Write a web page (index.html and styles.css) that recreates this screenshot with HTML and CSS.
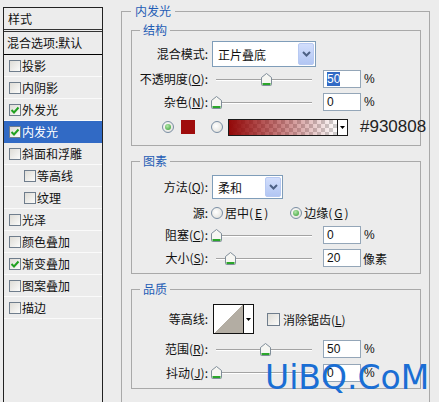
FILE: index.html
```html
<!DOCTYPE html>
<html>
<head>
    <title>图层样式 - 内发光</title>
    <link rel="stylesheet" href="styles.css">
</head>
<body>
    <div class="dialog">
        <div class="side">
            <div class="side-head">样式</div>
            <div class="side-blend">混合选项:默认</div>
            <ul class="side-list">
                <li><span class="cb"></span>投影</li>
                <li><span class="cb"></span>内阴影</li>
                <li><span class="cb"><svg width="10" height="10" viewBox="0 0 10 10"><path d="M1.5 5 L4 7.5 L8.5 2.5" fill="none" stroke="#21a121" stroke-width="2"/></svg></span>外发光</li>
                <li class="on"><span class="cb"><svg width="10" height="10" viewBox="0 0 10 10"><path d="M1.5 5 L4 7.5 L8.5 2.5" fill="none" stroke="#21a121" stroke-width="2"/></svg></span>内发光</li>
                <li><span class="cb"></span>斜面和浮雕</li>
                <li class="sub"><span class="cb"></span>等高线</li>
                <li class="sub"><span class="cb"></span>纹理</li>
                <li><span class="cb"></span>光泽</li>
                <li><span class="cb"></span>颜色叠加</li>
                <li><span class="cb"><svg width="10" height="10" viewBox="0 0 10 10"><path d="M1.5 5 L4 7.5 L8.5 2.5" fill="none" stroke="#21a121" stroke-width="2"/></svg></span>渐变叠加</li>
                <li><span class="cb"></span>图案叠加</li>
                <li><span class="cb"></span>描边</li>
            </ul>
        </div>

        <div class="group">
            <span class="title title-main">内发光</span>

            <div class="box box-struct">
                <span class="title">结构</span>
                <div class="row row-26">
                    <label class="lbl">混合模式:</label>
                    <div class="select sel-blend"><span>正片叠底</span><i class="dd"><svg width="9" height="6" viewBox="0 0 9 6"><path d="M1 1 L4.5 4.5 L8 1" fill="none" stroke="#4d6185" stroke-width="2"/></svg></i></div>
                </div>
                <div class="row row-24">
                    <label class="lbl">不透明度(<u>O</u>):</label>
                    <div class="slider"><svg class="thumb" style="left:50px" width="11" height="13" viewBox="0 0 11 13"><path d="M5.5 0.5 L10.5 4.5 V11.5 Q10.5 12.5 9.5 12.5 H1.5 Q0.5 12.5 0.5 11.5 V4.5 Z" fill="#f6f6f2" stroke="#7f8d99"/><path d="M1.5 11 H9.5" stroke="#2aa52a" stroke-width="2"/></svg></div>
                    <div class="num"><span class="picked">50</span></div>
                    <span class="unit">%</span>
                </div>
                <div class="row row-22">
                    <label class="lbl">杂色(<u>N</u>):</label>
                    <div class="slider"><svg class="thumb" style="left:0px" width="11" height="13" viewBox="0 0 11 13"><path d="M5.5 0.5 L10.5 4.5 V11.5 Q10.5 12.5 9.5 12.5 H1.5 Q0.5 12.5 0.5 11.5 V4.5 Z" fill="#f6f6f2" stroke="#7f8d99"/><path d="M1.5 11 H9.5" stroke="#2aa52a" stroke-width="2"/></svg></div>
                    <div class="num">0</div>
                    <span class="unit">%</span>
                </div>
                <div class="row row-color">
                    <span class="radio on"></span>
                    <span class="swatch"></span>
                    <span class="radio radio-grad"></span>
                    <div class="gradient">
                        <span class="gradient-bar"></span>
                        <span class="gradient-btn"><svg width="5" height="3" viewBox="0 0 5 3"><path d="M0 0 H5 L2.5 3 Z" fill="#000"/></svg></span>
                    </div>
                    <span class="hex">#930808</span>
                </div>
            </div>

            <div class="box box-elem">
                <span class="title">图素</span>
                <div class="row row-28">
                    <label class="lbl">方法(<u>Q</u>):</label>
                    <div class="select sel-method"><span>柔和</span><i class="dd"><svg width="9" height="6" viewBox="0 0 9 6"><path d="M1 1 L4.5 4.5 L8 1" fill="none" stroke="#4d6185" stroke-width="2"/></svg></i></div>
                </div>
                <div class="row row-23">
                    <label class="lbl">源:</label>
                    <span class="opt opt-first"><span class="radio"></span>居中(<u>E</u>)</span>
                    <span class="opt opt-second"><span class="radio on"></span>边缘(<u>G</u>)</span>
                </div>
                <div class="row row-22">
                    <label class="lbl">阻塞(<u>C</u>):</label>
                    <div class="slider"><svg class="thumb" style="left:0px" width="11" height="13" viewBox="0 0 11 13"><path d="M5.5 0.5 L10.5 4.5 V11.5 Q10.5 12.5 9.5 12.5 H1.5 Q0.5 12.5 0.5 11.5 V4.5 Z" fill="#f6f6f2" stroke="#7f8d99"/><path d="M1.5 11 H9.5" stroke="#2aa52a" stroke-width="2"/></svg></div>
                    <div class="num">0</div>
                    <span class="unit">%</span>
                </div>
                <div class="row row-24">
                    <label class="lbl">大小(<u>S</u>):</label>
                    <div class="slider"><svg class="thumb" style="left:14px" width="11" height="13" viewBox="0 0 11 13"><path d="M5.5 0.5 L10.5 4.5 V11.5 Q10.5 12.5 9.5 12.5 H1.5 Q0.5 12.5 0.5 11.5 V4.5 Z" fill="#f6f6f2" stroke="#7f8d99"/><path d="M1.5 11 H9.5" stroke="#2aa52a" stroke-width="2"/></svg></div>
                    <div class="num">20</div>
                    <span class="unit unit-px">像素</span>
                </div>
            </div>

            <div class="box box-qual">
                <span class="title">品质</span>
                <div class="row row-34">
                    <label class="lbl">等高线:</label>
                    <div class="contour">
                        <span class="contour-shape"></span>
                        <span class="contour-btn"><svg width="5" height="3" viewBox="0 0 5 3"><path d="M0 0 H5 L2.5 3 Z" fill="#000"/></svg></span>
                    </div>
                    <span class="cb cb-aa"></span>
                    <span class="aa-text">消除锯齿(<u>L</u>)</span>
                </div>
                <div class="row row-26">
                    <label class="lbl">范围(<u>R</u>):</label>
                    <div class="slider"><svg class="thumb" style="left:49px" width="11" height="13" viewBox="0 0 11 13"><path d="M5.5 0.5 L10.5 4.5 V11.5 Q10.5 12.5 9.5 12.5 H1.5 Q0.5 12.5 0.5 11.5 V4.5 Z" fill="#f6f6f2" stroke="#7f8d99"/><path d="M1.5 11 H9.5" stroke="#2aa52a" stroke-width="2"/></svg></div>
                    <div class="num">50</div>
                    <span class="unit">%</span>
                </div>
                <div class="row row-21">
                    <label class="lbl">抖动(<u>J</u>):</label>
                    <div class="slider"><svg class="thumb" style="left:0px" width="11" height="13" viewBox="0 0 11 13"><path d="M5.5 0.5 L10.5 4.5 V11.5 Q10.5 12.5 9.5 12.5 H1.5 Q0.5 12.5 0.5 11.5 V4.5 Z" fill="#f6f6f2" stroke="#7f8d99"/><path d="M1.5 11 H9.5" stroke="#2aa52a" stroke-width="2"/></svg></div>
                    <div class="num">0</div>
                    <span class="unit">%</span>
                </div>
            </div>
        </div>
    </div>
    <div class="watermark">UiBQ.CoM</div>
</body>
</html>
```
FILE: styles.css
```css
html, body { margin: 0; height: 100%; overflow: hidden; }
body { background: #ececec; font-family: "Noto Sans CJK SC", "Liberation Sans", sans-serif; font-size: 12px; color: #111; }
u { text-decoration: underline; }

.dialog { display: flex; align-items: flex-start; }

/* style list on the left */
.side { margin: 7px 0 0 3px; width: 100px; height: 395px; box-sizing: border-box; border: 1px solid #222; border-bottom: none; }
.side-head { height: 21px; line-height: 21px; padding-left: 4px; border-bottom: 3px double #333; }
.side-blend { height: 22px; line-height: 22px; padding-left: 3px; border-bottom: 1px solid #000; }
.side-list { list-style: none; margin: 0; padding: 0; }
.side-list li { height: 21px; display: flex; align-items: center; padding-left: 5px; border-bottom: 1px solid #fafafa; }
.side-list li.sub { padding-left: 20px; }
.side-list li.on { background: #316ac5; color: #fff; border-bottom-color: #316ac5; }

.cb { width: 12px; height: 12px; box-sizing: border-box; border: 1px solid #6f7d8c; background: linear-gradient(135deg, #dedcd6, #fbfbfa); margin-right: 1px; flex: none; display: flex; align-items: center; justify-content: center; }

/* group boxes */
.group { position: relative; margin: 11px 0 0 18px; width: 309px; height: 410px; box-sizing: border-box; padding: 18px 8px 0 9px; border: 1px solid #a9a9a9; }
.box { position: relative; width: 290px; box-sizing: border-box; border: 1px solid #a9a9a9; }
.box-struct { padding: 10px 0 4px; }
.box-elem { margin-top: 15px; padding: 11px 0 3px; }
.box-qual { margin-top: 15px; padding: 12px 0 5px; }
.title { position: absolute; top: -9px; left: 8px; padding: 0 3px; line-height: 16px; background: #ececec; color: #1f5cb5; }
.title-main { left: 9px; padding: 0 4px; }

.row { display: flex; align-items: center; }
.row-21 { height: 21px; }
.row-22 { height: 22px; }
.row-23 { height: 23px; }
.row-24 { height: 24px; }
.row-26 { height: 26px; }
.row-28 { height: 28px; }
.row-34 { height: 34px; }
.lbl { width: 76px; margin-right: 4px; text-align: right; white-space: nowrap; flex: none; line-height: 16px; }

/* drop-down boxes */
.select { display: flex; align-items: center; justify-content: space-between; box-sizing: border-box; border: 1px solid #7f9db9; background: #fff; padding: 1px 1px 1px 5px; flex: none; }
.sel-blend { width: 104px; height: 26px; }
.sel-method { width: 71px; height: 24px; }
.select span { line-height: 16px; padding-top: 2px; }
.dd { width: 16px; align-self: stretch; box-sizing: border-box; border: 1px solid #b7c9f2; border-radius: 2px; background: linear-gradient(#d2defc, #b2c6f3); display: flex; align-items: center; justify-content: center; }

/* sliders */
.slider { position: relative; width: 106px; height: 13px; margin-left: -1px; flex: none; }
.slider::before { content: ""; position: absolute; left: 5px; right: 5px; top: 6px; height: 1px; background: #a3a3a3; border-bottom: 1px solid #fff; }
.thumb { position: absolute; top: 0; }

.num { width: 38px; height: 18px; box-sizing: border-box; margin-left: 6px; padding-left: 3px; border: 1px solid #94a6b8; background: #fff; font-family: "Liberation Sans", sans-serif; font-size: 12px; line-height: 16px; flex: none; }
.picked { background: #316ac5; color: #fff; }
.unit { margin-left: 3px; font-family: "Liberation Sans", sans-serif; font-size: 12px; }
.unit-px { font-family: "Noto Sans CJK SC", sans-serif; margin-left: 2px; }

/* colour row */
.row-color { height: 28px; padding-left: 30px; }
.radio { width: 12px; height: 12px; box-sizing: border-box; border: 1px solid #7a8ea4; border-radius: 50%; background: radial-gradient(circle at 40% 40%, #fff, #dcdbd5); flex: none; display: flex; align-items: center; justify-content: center; }
.radio.on::after { content: ""; width: 6px; height: 6px; border-radius: 50%; background: radial-gradient(circle at 40% 35%, #b4e8ab, #2f9a2f); }
.swatch { width: 14px; height: 14px; margin-left: 7px; background: #9f0c0c; flex: none; }
.radio-grad { margin-left: 16px; }
.gradient { display: flex; width: 120px; height: 17px; margin-left: 5px; box-sizing: border-box; border: 1px solid #1a1a1a; flex: none; }
.gradient-bar { flex: 1; background: linear-gradient(to right, #930808, rgba(147, 8, 8, 0)), conic-gradient(#cfcfcf 25%, #fff 0 50%, #cfcfcf 0 75%, #fff 0) 0 0 / 8px 8px; }
.gradient-btn { width: 9px; border-left: 1px solid #1a1a1a; background: #fff; display: flex; align-items: center; justify-content: center; }
.hex { margin-left: 12px; font-family: "Liberation Sans", sans-serif; font-size: 17px; color: #222; }

/* source options */
.opt { display: flex; align-items: center; gap: 2px; }
.opt-first { margin-left: -1px; }
.opt-second { margin-left: 22px; }

/* contour picker */
.contour { display: flex; width: 41px; height: 30px; box-sizing: border-box; margin-left: 1px; border: 1px solid #111; flex: none; }
.contour-shape { width: 29px; border-right: 1px solid #111; background: linear-gradient(to bottom right, #fff 50%, #b3ada3 50%); }
.contour-btn { flex: 1; background: #fff; display: flex; align-items: center; justify-content: center; }
.cb-aa { width: 13px; height: 13px; margin-left: 13px; }
.aa-text { margin-left: 2px; }

.watermark { position: absolute; left: 265px; top: 361px; font-family: "DejaVu Sans", sans-serif; font-size: 33px; line-height: 33px; color: #1a6ed4; }
```
